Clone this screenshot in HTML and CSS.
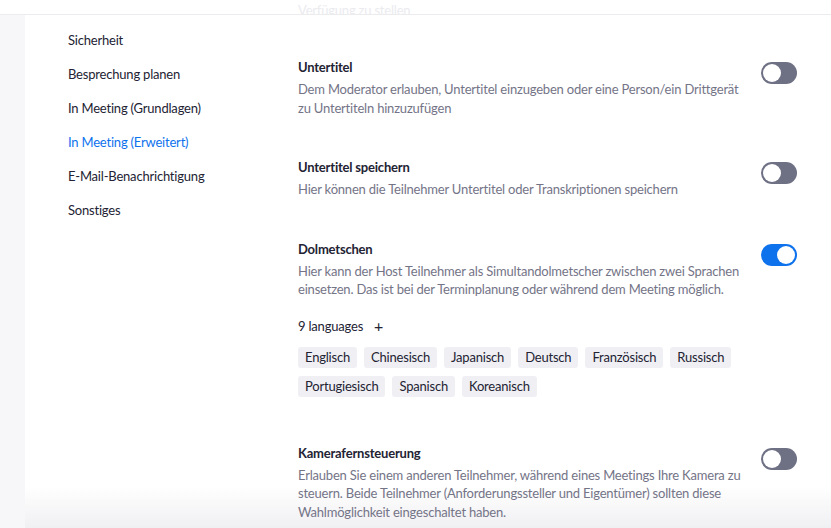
FILE: index.html
```html
<!DOCTYPE html>
<html lang="de">
<head>
    <meta charset="UTF-8">
    <meta name="viewport" content="width=device-width, initial-scale=1.0">
    <title>Einstellungen</title>
    <link rel="stylesheet" href="styles.css">
</head>
<body>
    <div class="topbar">
        <span class="topbar-ghost">Verfügung zu stellen</span>
    </div>

    <div class="page">
        <div class="side-strip"></div>

        <nav class="settings-nav">
            <a class="nav-item" href="#">Sicherheit</a>
            <a class="nav-item" href="#">Besprechung planen</a>
            <a class="nav-item" href="#">In Meeting (Grundlagen)</a>
            <a class="nav-item active" href="#">In Meeting (Erweitert)</a>
            <a class="nav-item" href="#">E-Mail-Benachrichtigung</a>
            <a class="nav-item" href="#">Sonstiges</a>
        </nav>

        <main class="settings-content">
            <div class="setting">
                <div class="setting-text">
                    <h3 class="setting-title">Untertitel</h3>
                    <p class="setting-desc">Dem Moderator erlauben, Untertitel einzugeben oder eine Person/ein Drittgerät zu Untertiteln hinzuzufügen</p>
                </div>
                <span class="toggle"><span class="knob"></span></span>
            </div>

            <div class="setting">
                <div class="setting-text">
                    <h3 class="setting-title">Untertitel speichern</h3>
                    <p class="setting-desc">Hier können die Teilnehmer Untertitel oder Transkriptionen speichern</p>
                </div>
                <span class="toggle"><span class="knob"></span></span>
            </div>

            <div class="setting">
                <div class="setting-text">
                    <h3 class="setting-title">Dolmetschen</h3>
                    <p class="setting-desc">Hier kann der Host Teilnehmer als Simultandolmetscher zwischen zwei Sprachen einsetzen. Das ist bei der Terminplanung oder während dem Meeting möglich.</p>

                    <div class="lang-head">
                        <span>9 languages</span>
                        <span class="lang-add">+</span>
                    </div>
                    <div class="lang-list">
                        <span class="lang-tag">Englisch</span>
                        <span class="lang-tag">Chinesisch</span>
                        <span class="lang-tag">Japanisch</span>
                        <span class="lang-tag">Deutsch</span>
                        <span class="lang-tag">Französisch</span>
                        <span class="lang-tag">Russisch</span>
                        <span class="lang-tag">Portugiesisch</span>
                        <span class="lang-tag">Spanisch</span>
                        <span class="lang-tag">Koreanisch</span>
                    </div>
                </div>
                <span class="toggle on"><span class="knob"></span></span>
            </div>

            <div class="setting">
                <div class="setting-text">
                    <h3 class="setting-title">Kamerafernsteuerung</h3>
                    <p class="setting-desc">Erlauben Sie einem anderen Teilnehmer, während eines Meetings Ihre Kamera zu steuern. Beide Teilnehmer (Anforderungssteller und Eigentümer) sollten diese Wahlmöglichkeit eingeschaltet haben.</p>
                </div>
                <span class="toggle"><span class="knob"></span></span>
            </div>
        </main>
    </div>
</body>
</html>
```

FILE: styles.css
```css
* {
    margin: 0;
    padding: 0;
    box-sizing: border-box;
}

body {
    font-family: Lato, 'Open Sans', sans-serif;
    font-size: 13px;
    letter-spacing: -0.2px;
    color: #232333;
    background: white;
    height: 528px;
    overflow: hidden;
}

.topbar {
    height: 15px;
    background: white;
    border-bottom: 1px solid #ececef;
    padding-left: 298px;
    overflow: hidden;
}

.topbar-ghost {
    display: block;
    line-height: 20px;
    color: #ebebef;
}

.page {
    display: flex;
    height: 513px;
    background: linear-gradient(white calc(100% - 42px), #f0f0f3);
}

.side-strip {
    width: 25px;
    background: #f7f7fa;
}

.settings-nav {
    width: 273px;
    padding: 8px 0 0 43px;
    display: flex;
    flex-direction: column;
}

.nav-item {
    display: block;
    line-height: 34px;
    color: #232333;
    text-decoration: none;
}

.nav-item.active {
    color: #0e72ed;
}

.settings-content {
    flex: 1;
    padding: 42px 34px 0 0;
}

.setting {
    display: flex;
    justify-content: space-between;
    align-items: flex-start;
    margin-bottom: 40px;
}

.setting-text {
    width: 452px;
}

.setting-title {
    font-size: 13px;
    font-weight: 700;
    line-height: 20px;
}

.setting-desc {
    margin-top: 3px;
    color: #747487;
    line-height: 18.5px;
}

.toggle {
    position: relative;
    width: 36px;
    height: 22px;
    margin-top: 5px;
    border-radius: 11px;
    background: #6e7084;
    flex-shrink: 0;
}

.toggle .knob {
    position: absolute;
    top: 2px;
    left: 2px;
    width: 18px;
    height: 18px;
    border-radius: 50%;
    background: white;
}

.toggle.on {
    background: #0e72ed;
}

.toggle.on .knob {
    left: 16px;
}

.lang-head {
    margin-top: 17px;
    line-height: 20px;
    display: flex;
    gap: 11px;
}

.lang-add {
    font-size: 16px;
}

.lang-list {
    margin-top: 11px;
    padding-bottom: 6px;
    display: flex;
    flex-wrap: wrap;
    gap: 8px 7px;
}

.lang-tag {
    background: #f0f0f4;
    border-radius: 3px;
    padding: 0 7px;
    line-height: 21px;
}
```
